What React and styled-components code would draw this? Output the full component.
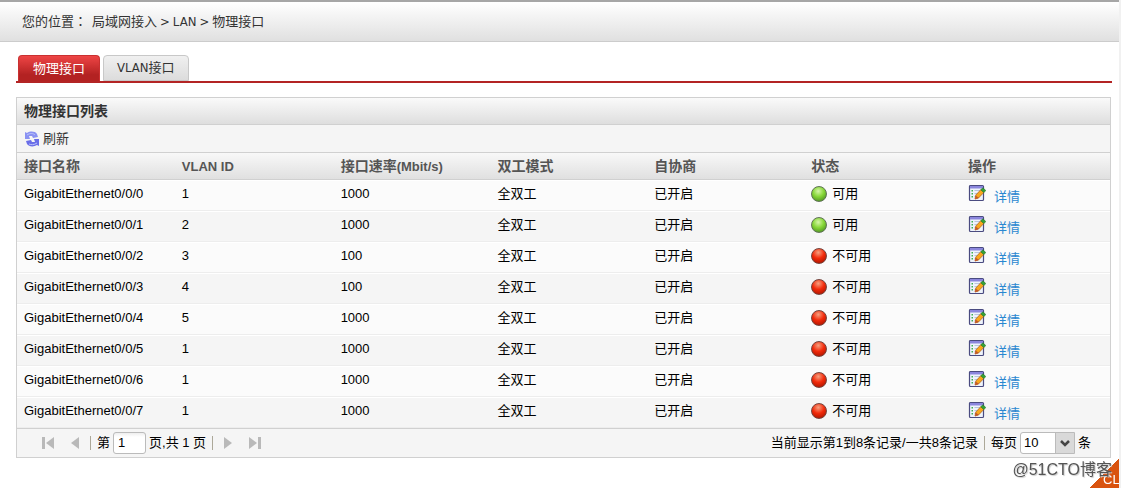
import React, { useState } from 'react';
import styled, { createGlobalStyle } from 'styled-components';

const GlobalStyle = createGlobalStyle`
    * {
        box-sizing:border-box;
    }
    html {
        height:100%;
    }
    body {
        margin:0;
        min-height:100%;
        background:#fff;
        border-right:2px solid #f1f1f1;
        color:#000;
        font:13px/18px "Liberation Sans", "Noto Sans CJK SC", sans-serif;
    }
`

const Breadcrumb = styled.nav`
    display:flex;
    align-items:center;
    gap:3px;
    height:42px;
    padding:0 22px;
    border-top:2px solid #a6a6a6;
    border-bottom:1px solid #ccc;
    background:linear-gradient(#fff, #e0e0e0);
    color:#333;
    font-family:"DejaVu Sans Condensed", "Noto Sans CJK SC", sans-serif;
`

const Colon = styled.span`
    margin-right:2px;
    font-family:"Noto Sans CJK TC", sans-serif;
`

const Content = styled.main`
    padding:13px 8px 0 16px;
`

const TabBar = styled.div`
    display:flex;
    align-items:flex-end;
    gap:3px;
    margin-right:-1px;
    padding-left:2px;
    border-bottom:2px solid #b32424;
`

const Tab = styled.button`
    height:26px;
    padding:0 ${props=>props.$active?'14px':'13px'};
    border:1px solid ${props=>props.$active?'#c93030':'#c8c8c8'};
    border-bottom-width:${props=>props.$active?'0':'1px'};
    border-radius:4px 4px 0 0;
    background:${props=>props.$active?'linear-gradient(#ee4545, #b32222 75%)':'linear-gradient(#f0f0f0, #dcdcdc)'};
    color:${props=>props.$active?'#fff':'#333'};
    font:13px/18px "DejaVu Sans Condensed", "Noto Sans CJK SC", sans-serif;
`

const Panel = styled.section`
    margin-top:14px;
    border:1px solid #d0d0d0;
    background:#f5f5f5;
`

const PanelTitle = styled.h1`
    margin:0;
    padding:5px 7px 4px;
    border-bottom:1px solid #d0d0d0;
    background:linear-gradient(#fafafa, #dedede);
    color:#333;
    font-size:14px;
    line-height:17px;
`

const Toolbar = styled.div`
    display:flex;
    height:28px;
    padding:0 7px;
    border-bottom:1px solid #d0d0d0;
`

const ToolButton = styled.button`
    display:flex;
    align-items:center;
    gap:3px;
    padding:0;
    border:0;
    background:none;
    color:#333;
    font:inherit;
`

const Table = styled.table`
    width:100%;
    table-layout:fixed;
    border-collapse:separate;
    border-spacing:0;
`

const HeadCell = styled.th`
    width:${props=>props.$width};
    height:27px;
    padding:0 7px;
    border-bottom:1px solid #d0d0d0;
    background:linear-gradient(#f8f8f8, #e0e0e0);
    color:#555;
    font-size:14px;
    line-height:18px;
    text-align:left;
`

const Latin = styled.span`
    font-size:13px;
`

const Row = styled.tr`
    background:${props=>props.$striped?'#f5f5f5':'#fbfbfb'};
`

const Cell = styled.td`
    height:31px;
    padding:0 7px 3px;
    border-top:1px solid #fff;
    border-bottom:1px solid #ededed;
`

const Status = styled.div`
    display:flex;
    align-items:center;
    gap:5px;
`

const Lamp = styled.span`
    width:16px;
    height:16px;
    border:1px solid ${props=>props.$on?'#5f7355':'#75433c'};
    border-radius:50%;
    background:${props=>props.$on
        ?'radial-gradient(circle at 45% 30%, #d5f5a8, #85d635 45%, #4b8a25 90%)'
        :'radial-gradient(circle at 45% 25%, #f5a080, #f32a0a 45%, #a51500 90%)'};
`

const Actions = styled.div`
    display:flex;
    align-items:flex-start;
    gap:8px;
    height:20px;
`

const EditButton = styled.button`
    display:flex;
    padding:0;
    border:0;
    background:none;
`

const DetailLink = styled.a`
    padding-top:4px;
    color:#2a87d0;
    text-decoration:none;
`

const Pager = styled.footer`
    display:flex;
    align-items:center;
    justify-content:space-between;
    height:29px;
    padding:0 19px 0 24px;
    border-top:1px solid #d0d0d0;
`

const PagerGroup = styled.div`
    display:flex;
    align-items:center;
    gap:3px;
`

const PagerArrows = styled.div`
    display:flex;
    gap:9px;
    padding-right:2px;
`

const NextArrows = styled(PagerArrows)`
    padding:0 0 0 2px;
`

const PagerButton = styled.button`
    display:flex;
    padding:0;
    border:0;
    background:none;
`

const Divider = styled.span`
    width:1px;
    height:14px;
    margin:0 3px;
    background:#aca899;
`

const PageInput = styled.input`
    width:33px;
    height:22px;
    padding:0 4px 2px;
    border:1px solid #bbb;
    border-radius:3px;
    background:linear-gradient(#eee, #fff 4px);
    font:inherit;
`

const SelectBox = styled.span`
    display:flex;
    align-items:center;
    height:22px;
    border:1px solid #bbb;
    border-radius:3px 0 0 3px;
    background:linear-gradient(to left, #d9d9d9 18px, #bbb 18px, #bbb 19px, #fff 19px);
`

const PageSize = styled.select`
    width:35px;
    padding:0 3px 1px;
    border:0;
    appearance:none;
    background:none;
    font:inherit;
`

const Watermark = styled.div`
    position:fixed;
    right:9px;
    bottom:9px;
    z-index:1;
    color:#555;
    font-size:16px;
    text-shadow:1px 1px 1px #ccc;
`

const Corner = styled.div`
    position:fixed;
    right:2px;
    bottom:0;
    width:29px;
    height:29px;
    padding:14px 0 0 13px;
    overflow:hidden;
    background:linear-gradient(135deg, transparent 50%, #d9530f 50%);
    color:#fff;
    font-size:13px;
    line-height:14px;
`

const RefreshIcon = () => (
    <svg width="16" height="16" viewBox="0 0 16 16" aria-hidden="true">
        <path d="M1 1l2 1c3-2 8-2 10 1l1 3-5 1-1-2-3 0 1 3-5 0z" fill="#8a92f2" />
        <path d="M15 15l-2-1c-3 2-8 2-10-1l-1-3 5-1 1 2 3 0-1-3 5 0z" fill="#6a6ee8" />
        <path d="M3 4c3-2 6-2 8 0M5 13c2 1 5 1 8-1" fill="none" stroke="#bcc2fb" />
    </svg>
)

const EditIcon = () => (
    <svg width="18" height="18" viewBox="0 0 18 18" aria-hidden="true">
        <rect x="1.500" y="1.500" width="14" height="15" rx="1" fill="#eef3fb" stroke="#4a4b80" strokeWidth="1.200" />
        <path d="M2 2h13v2.500H2z" fill="#8b86dd" />
        <path d="M3.500 6H5v1.500H3.500zM3.500 9H5v1.500H3.500zM3.500 12H5v1.500H3.500z" fill="#3eae50" />
        <path d="M6.500 6.500h6M6.500 9.500h4M6.500 12.500h2" stroke="#b9c4de" />
        <path d="M7 15l.8-4L13 5.500l3 2.800L10.500 14z" fill="#f9a71c" stroke="#a65c12" strokeWidth=".7" />
        <path d="M7 15.300l.8-3.800 3 2.500z" fill="#c3582c" />
        <path d="M12.800 5.800l2-2 3 2.700-2 2.100z" fill="#35a135" stroke="#1f7427" strokeWidth=".6" />
    </svg>
)

const ArrowIcon = ({ flip, bar }) => (
    <svg width="16" height="16" viewBox="0 0 16 16" aria-hidden="true">
        <g transform={flip?'matrix(-1 0 0 1 16 0)':undefined} fill="#b9b9b9">
            <path d="M13 2v12L5 8z" />
            {bar && <path d="M1 2h3v12H1z" />}
        </g>
    </svg>
)

const ChevronIcon = () => (
    <svg width="18" height="20" viewBox="0 0 18 20" aria-hidden="true">
        <path d="M5 8l4 4 4-4" fill="none" stroke="#444" strokeWidth="2.500" />
    </svg>
)

const columns = [
    { title:'接口名称', width:'14.44%' },
    { title:'', latin:'VLAN ID', width:'14.53%' },
    { title:'接口速率', latin:'(Mbit/s)', width:'14.35%' },
    { title:'双工模式', width:'14.35%' },
    { title:'自协商', width:'14.35%' },
    { title:'状态', width:'14.35%' },
    { title:'操作', width:'auto' },
]

const ports = [
    { vlan:1, speed:1000, up:true },
    { vlan:2, speed:1000, up:true },
    { vlan:3, speed:100, up:false },
    { vlan:4, speed:100, up:false },
    { vlan:5, speed:1000, up:false },
    { vlan:1, speed:1000, up:false },
    { vlan:1, speed:1000, up:false },
    { vlan:1, speed:1000, up:false },
]

const PortRow = ({ port, index }) => (
    <Row $striped={index % 2 === 1}>
        <Cell>{'GigabitEthernet0/0/' + index}</Cell>
        <Cell>{port.vlan}</Cell>
        <Cell>{port.speed}</Cell>
        <Cell>全双工</Cell>
        <Cell>已开启</Cell>
        <Cell>
            <Status><Lamp $on={port.up} />{port.up?'可用':'不可用'}</Status>
        </Cell>
        <Cell>
            <Actions>
                <EditButton type="button" aria-label="编辑"><EditIcon /></EditButton>
                <DetailLink href="#detail">详情</DetailLink>
            </Actions>
        </Cell>
    </Row>
)

const App = () => {
    const [tab, setTab] = useState(0);
    const [page, setPage] = useState('1');
    return (
        <>
            <GlobalStyle />
            <Breadcrumb>
                <span>您的位置<Colon>：</Colon></span>
                <span>局域网接入</span>
                <span>&gt;</span>
                <span>LAN</span>
                <span>&gt;</span>
                <span>物理接口</span>
            </Breadcrumb>
            <Content>
                <TabBar role="tablist">
                    {['物理接口', 'VLAN接口'].map((name, i) => (
                        <Tab key={name} type="button" role="tab" aria-selected={tab === i} $active={tab === i} onClick={() => setTab(i)}>{name}</Tab>
                    ))}
                </TabBar>
                <Panel>
                    <PanelTitle>物理接口列表</PanelTitle>
                    <Toolbar>
                        <ToolButton type="button"><RefreshIcon />刷新</ToolButton>
                    </Toolbar>
                    <Table>
                        <thead>
                            <tr>
                                {columns.map(col => (
                                    <HeadCell key={col.title} $width={col.width}>
                                        {col.title}{col.latin && <Latin>{col.latin}</Latin>}
                                    </HeadCell>
                                ))}
                            </tr>
                        </thead>
                        <tbody>
                            {ports.map((port, i) => <PortRow key={i} port={port} index={i} />)}
                        </tbody>
                    </Table>
                    <Pager>
                        <PagerGroup>
                            <PagerArrows>
                                <PagerButton type="button" aria-label="首页"><ArrowIcon bar /></PagerButton>
                                <PagerButton type="button" aria-label="上一页"><ArrowIcon /></PagerButton>
                            </PagerArrows>
                            <Divider />
                            <label htmlFor="page">第</label>
                            <PageInput id="page" type="text" value={page} onChange={e => setPage(e.target.value)} />
                            <span>页,共 1 页</span>
                            <Divider />
                            <NextArrows>
                                <PagerButton type="button" aria-label="下一页"><ArrowIcon flip /></PagerButton>
                                <PagerButton type="button" aria-label="末页"><ArrowIcon flip bar /></PagerButton>
                            </NextArrows>
                        </PagerGroup>
                        <PagerGroup>
                            <span>当前显示第1到8条记录/一共8条记录</span>
                            <Divider />
                            <label htmlFor="size">每页</label>
                            <SelectBox>
                                <PageSize id="size" defaultValue="10">
                                    <option>10</option>
                                    <option>20</option>
                                    <option>50</option>
                                </PageSize>
                                <ChevronIcon />
                            </SelectBox>
                            <span>条</span>
                        </PagerGroup>
                    </Pager>
                </Panel>
            </Content>
            <Watermark>@51CTO博客</Watermark>
            <Corner>CL</Corner>
        </>
    );
}

export default App;
